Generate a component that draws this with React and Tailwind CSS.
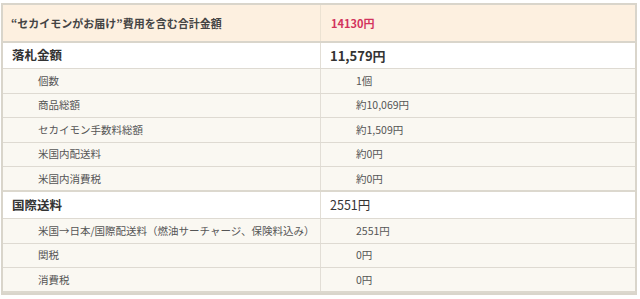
import React from 'react';

const font = { fontFamily: '"Noto Sans CJK JP", "Noto Sans", sans-serif' };

const items = [
  { type: 'section', label: '落札金額', value: '11,579円', bold: true },
  { type: 'sub', label: '個数', value: '1個' },
  { type: 'sub', label: '商品総額', value: '約10,069円' },
  { type: 'sub', label: 'セカイモン手数料総額', value: '約1,509円' },
  { type: 'sub', label: '米国内配送料', value: '約0円' },
  { type: 'sub', label: '米国内消費税', value: '約0円', last: true },
  { type: 'section', label: '国際送料', value: '2551円', tall: true },
  { type: 'sub', label: '米国→日本/国際配送料（燃油サーチャージ、保険料込み）', value: '2551円' },
  { type: 'sub', label: '関税', value: '0円' },
  { type: 'sub', label: '消費税', value: '0円', last: true },
];

const Row = ({ item }) => {
  if (item.type === 'section') {
    return (
      <div className={`flex bg-white border-b border-[#dedad2] ${item.tall ? 'h-[27px]' : 'h-[26px]'}`}>
        <div
          className={`w-[318px] shrink-0 border-r border-[#e2ded6] pl-[9px] flex items-center text-[12.5px] text-[#333] ${
            item.bold ? 'font-bold' : 'font-semibold'
          }`}
        >
          {item.label}
        </div>
        <div
          className={`flex-1 pl-[9px] flex items-center text-[#333] ${
            item.bold ? 'text-[13px] font-bold' : 'text-[12.5px]'
          }`}
        >
          {item.value}
        </div>
      </div>
    );
  }
  return (
    <div
      className={`flex bg-[#faf8f2] ${
        item.last ? 'h-[25px] border-b-2 border-[#dcd8ce]' : 'h-[24.5px] border-b border-[#dedad2]'
      }`}
    >
      <div className="w-[318px] shrink-0 border-r border-[#e2ded6] pl-[35px] flex items-center text-[10.5px] text-[#555]">
        {item.label}
      </div>
      <div className="flex-1 pl-[35px] flex items-center text-[10.5px] text-[#555]">{item.value}</div>
    </div>
  );
};

export default function App() {
  return (
    <div className="bg-white w-[640px] h-[299px] pt-[3px] pl-px" style={font}>
      <div className="w-[636px] border-2 border-[#d9d5cb]">
        {/* total row */}
        <div className="flex h-[38px] bg-[#fdf0e0] border-b-2 border-[#d9d5cb]">
          <div className="w-[318px] shrink-0 border-r border-[#ece2d2] pl-[8px] flex items-center text-[11px] font-bold text-[#444]">
            “セカイモンがお届け”費用を含む合計金額
          </div>
          <div className="flex-1 pl-[10px] flex items-center text-[11px] font-bold text-[#d2335c]">
            14130円
          </div>
        </div>
        {items.map((item, i) => (
          <Row key={i} item={item} />
        ))}
      </div>
    </div>
  );
}
